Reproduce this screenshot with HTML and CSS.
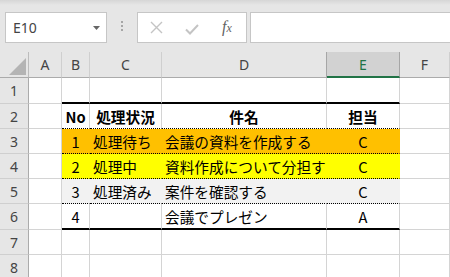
FILE: index.html
```html
<!DOCTYPE html>
<html lang="ja">
<head>
  <meta charset="UTF-8">
  <title>Sheet</title>
  <link rel="stylesheet" href="styles.css">
</head>
<body>

  <!-- formula bar -->
  <div class="toolbar">
    <div class="namebox">
      <span>E10</span>
      <svg class="drop" width="7" height="4" viewBox="0 0 7 4"><path d="M0 0H7L3.5 4Z" fill="#666"/></svg>
    </div>
    <div class="grip"><i></i><i></i><i></i></div>
    <div class="fbtns">
      <svg class="ico-x" width="13" height="13" viewBox="0 0 13 13"><path d="M1 1L12 12M12 1L1 12" stroke="#c4c4c4" stroke-width="1.4" fill="none"/></svg>
      <svg class="ico-ok" width="14" height="11" viewBox="0 0 14 11"><path d="M1 5.5L5 9.5L13 1" stroke="#c4c4c4" stroke-width="2" fill="none"/></svg>
      <span class="fx">f<small>x</small></span>
    </div>
    <div class="finput"></div>
  </div>

  <!-- grid -->
  <div class="sheet">
    <div class="corner"><div class="tri"></div></div>
    <div class="ch">A</div>
    <div class="ch">B</div>
    <div class="ch">C</div>
    <div class="ch pre-sel">D</div>
    <div class="ch sel">E</div>
    <div class="ch">F</div>

    <div class="rh">1</div>
    <div class="c"></div>
    <div class="c top"></div>
    <div class="c top"></div>
    <div class="c top"></div>
    <div class="c top"></div>
    <div class="c"></div>

    <div class="rh">2</div>
    <div class="c"></div>
    <div class="c dot mid b">No</div>
    <div class="c dot mid b">処理状況</div>
    <div class="c dot mid b">件名</div>
    <div class="c dot mid b">担当</div>
    <div class="c"></div>

    <div class="rh">3</div>
    <div class="c"></div>
    <div class="c dot orange mid">1</div>
    <div class="c dot orange">処理待ち</div>
    <div class="c dot orange">会議の資料を作成する</div>
    <div class="c dot orange mid">C</div>
    <div class="c"></div>

    <div class="rh">4</div>
    <div class="c"></div>
    <div class="c dot yellow mid">2</div>
    <div class="c dot yellow">処理中</div>
    <div class="c dot yellow">資料作成について分担す</div>
    <div class="c dot yellow mid">C</div>
    <div class="c"></div>

    <div class="rh">5</div>
    <div class="c"></div>
    <div class="c dot grey mid">3</div>
    <div class="c dot grey">処理済み</div>
    <div class="c dot grey">案件を確認する</div>
    <div class="c dot grey mid">C</div>
    <div class="c"></div>

    <div class="rh">6</div>
    <div class="c"></div>
    <div class="c bottom mid">4</div>
    <div class="c bottom"></div>
    <div class="c bottom">会議でプレゼン</div>
    <div class="c bottom mid">A</div>
    <div class="c"></div>

    <div class="rh">7</div>
    <div class="c"></div>
    <div class="c"></div>
    <div class="c"></div>
    <div class="c"></div>
    <div class="c"></div>
    <div class="c"></div>

    <div class="rh">8</div>
    <div class="c"></div>
    <div class="c"></div>
    <div class="c"></div>
    <div class="c"></div>
    <div class="c"></div>
    <div class="c"></div>
  </div>

</body>
</html>
```

FILE: styles.css
```css
* {
  box-sizing: border-box;
}

body {
  margin: 0;
  width: 450px;
  height: 277px;
  overflow: hidden;
  background: #e6e6e6;
  font-family: "Noto Sans CJK JP", "Noto Sans", sans-serif;
}

/* formula bar */
.toolbar {
  height: 52px;
  padding: 12px 0 0 5px;
  display: flex;
  align-items: flex-start;
  background: linear-gradient(to bottom, #d6d6d6 0, #e6e6e6 5px);
}

.namebox,
.fbtns,
.finput {
  height: 31px;
  background: #fff;
  border: 1px solid #c6c6c6;
}

.namebox {
  width: 102px;
  display: flex;
  align-items: center;
  padding: 0 6px 0 7px;
  font-family: "Noto Sans", sans-serif;
  font-size: 14px;
  color: #444;
}

.namebox span {
  flex: 1;
}

.grip {
  width: 2px;
  margin: 9px 14px 0 14px;
  display: flex;
  flex-direction: column;
  gap: 2px;
}

.grip i {
  width: 2px;
  height: 2px;
  background: #a6a6a6;
}

.fbtns {
  width: 110px;
  display: flex;
  align-items: center;
  padding-left: 12px;
}

.ico-ok {
  margin-left: 22px;
  margin-top: 3px;
}

.fx {
  margin-left: 23px;
  margin-top: -2px;
  font-family: "Liberation Serif", serif;
  font-style: italic;
  font-size: 16px;
  color: #636363;
}

.fx small {
  font-size: 12px;
}

.finput {
  flex: 1;
  margin-left: 3px;
  margin-right: -10px;
}

/* sheet grid */
.sheet {
  display: grid;
  grid-template-columns: 29px 33px 28px 72px 165px 73px 1fr;
  grid-template-rows: 26px 26px 25px 25px 25px 25px 26px 25px 25px;
  background: #fff;
}

.sheet > div {
  border-right: 1px solid #d4d4d4;
  border-bottom: 1px solid #d4d4d4;
  display: flex;
  align-items: center;
  white-space: nowrap;
  overflow: hidden;
  font-size: 14.67px;
  color: #000;
}

.sheet > .corner {
  background: #e6e6e6;
  justify-content: flex-end;
  align-items: flex-end;
  padding: 0 2px 2px 0;
  border-right-color: #bcbcbc;
  border-bottom-color: #ababab;
}

.tri {
  width: 0;
  height: 0;
  border-left: 17px solid transparent;
  border-bottom: 17px solid #b4b4b4;
}

.sheet > .ch {
  background: #e6e6e6;
  justify-content: center;
  font-family: "Noto Sans", sans-serif;
  font-size: 14px;
  color: #444;
  border-right-color: #cfcfcf;
  border-bottom-color: #ababab;
}

.sheet > .ch.pre-sel {
  border-right-color: #a6a6a6;
}

.sheet > .ch.sel {
  background: #d2d2d2;
  color: #217346;
  border-right-color: #a6a6a6;
  border-bottom: 2px solid #217346;
}

.sheet > .rh {
  background: #e6e6e6;
  justify-content: center;
  font-family: "Noto Sans", sans-serif;
  font-size: 14px;
  color: #444;
  border-right-color: #ababab;
  border-bottom-color: #cfcfcf;
}

.sheet > .c {
  padding-left: 3px;
}

.sheet > .mid {
  justify-content: center;
  padding-left: 0;
}

.sheet > .b {
  font-weight: bold;
}

.sheet > .top,
.sheet > .bottom {
  border-bottom: 2px solid #000;
}

.sheet > .dot {
  border-bottom: 1px dotted #000;
}

.sheet > .orange {
  background: #ffc000;
  border-right-color: #ffc000;
}

.sheet > .yellow {
  background: #ffff00;
  border-right-color: #ffff00;
}

.sheet > .grey {
  background: #f2f2f2;
  border-right-color: #f2f2f2;
}
```
